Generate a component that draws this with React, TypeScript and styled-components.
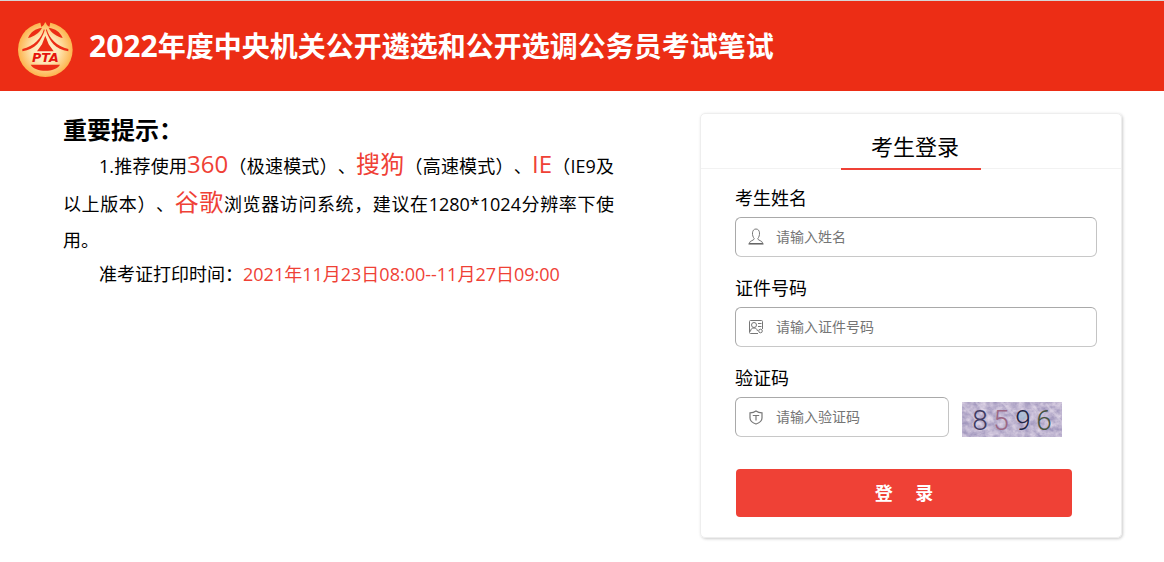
import React from "react";
import styled, { createGlobalStyle } from "styled-components";

const GlobalStyle = createGlobalStyle`
  *, *::before, *::after { box-sizing: border-box; }
  body {
    margin: 0;
    background: #fff;
    color: #000;
    font-family: "Open Sans", "Noto Sans CJK SC", sans-serif;
    font-size: 18px;
    font-weight: 370;
    text-spacing-trim: space-all;
  }
  h1, h2, p { margin: 0; }
`;

const Header = styled.header`
  display: flex;
  align-items: center;
  gap: 16px;
  height: 91px;
  padding: 6px 18px 0;
  border-top: 1px solid #d5d5d5;
  background: #ec2d15;
  color: #fff;
`;

const Title = styled.h1`
  padding-bottom: 6px;
  font-size: 28px;
  line-height: 40px;
  font-weight: 700;
`;

const Year = styled.span`
  font-size: 30px;
`;

const Main = styled.main`
  display: flex;
  align-items: flex-start;
  justify-content: space-between;
  gap: 48px;
  padding: 22px 42px 24px 63px;
`;

const Notice = styled.section`
  flex: 0 1 551px;
  padding-top: 1px;
`;

const NoticeTitle = styled.h2`
  font-size: 24px;
  line-height: 32px;
  font-weight: 700;
`;

const Paragraph = styled.p`
  line-height: 36px;
  text-indent: 36px;
  text-align: justify;
`;

const PrintTime = styled.p`
  line-height: 32px;
  text-indent: 36px;
`;

const Browser = styled.span`
  color: #ef4136;
  font-size: 24px;
`;

const Period = styled.span`
  color: #ef4136;
`;

const Panel = styled.section`
  flex: 0 0 422px;
  padding-bottom: 20px;
  border: 1px solid #eee;
  border-radius: 5px;
  box-shadow: 1px 1px 3px #ccc;
`;

const PanelHead = styled.div`
  display: flex;
  justify-content: center;
  height: 55px;
  border-bottom: 1px solid #f2f2f2;
`;

const PanelTitle = styled.h2`
  width: 140px;
  height: 56px;
  padding: 8px 0 0 8px;
  border-bottom: 2px solid #ef4136;
  font-size: 22px;
  line-height: 48px;
  font-weight: inherit;
  text-align: center;
`;

const Form = styled.form`
  display: flex;
  flex-direction: column;
  gap: 14px;
  padding: 12px 24px 0 34px;
`;

const Field = styled.div`
  display: flex;
  flex-direction: column;
`;

const Label = styled.label`
  height: 36px;
  line-height: 34px;
`;

const InputBox = styled.div<{ $width?: number }>`
  display: flex;
  align-items: center;
  gap: 12px;
  width: ${(p) => (p.$width ? `${p.$width}px` : "100%")};
  height: 40px;
  padding: 0 12px;
  border: 1px solid;
  border-color: #a9a9a9 #c4c4c4 #c8c8c8 #a9a9a9;
  border-radius: 6px;
`;

const Input = styled.input`
  flex: 1;
  min-width: 0;
  padding: 0 0 2px;
  border: 0;
  outline: 0;
  background: transparent;
  font: inherit;
  font-size: 14px;
  &::placeholder { color: #757575; opacity: 1; }
`;

const CodeRow = styled.div`
  display: flex;
  align-items: flex-end;
  gap: 13px;
`;

const Submit = styled.button`
  width: 336px;
  height: 48px;
  margin: 18px 0 0 1px;
  padding: 0 0 2px;
  border: 0;
  border-radius: 4px;
  background: #ef4136;
  color: #fff;
  font: inherit;
  font-weight: 700;
  cursor: pointer;
`;

const Logo = () => (
  <svg width="55" height="56" viewBox="0 0 165 168" aria-hidden="true">
    <defs>
      <radialGradient id="gold">
        <stop offset="0" stopColor="#fff3d0" />
        <stop offset="0.5" stopColor="#fee6b4" />
        <stop offset="1" stopColor="#fdb44e" />
      </radialGradient>
    </defs>
    <circle cx="82" cy="86" r="82" fill="url(#gold)" />
    <g fill="#ec2d15">
      <path d="M66 0H98L94 18Q86 14 82 2Q78 14 70 18z" />
      <path d="M72 20C52 23 38 32 30 51C48 46 64 36 72 20z" />
      <path d="M92 20C112 23 126 32 134 51C116 46 100 36 92 20z" />
      <path d="M78 24C70 52 48 76 13 84V91C52 86 70 60 80 28z" />
      <path d="M86 24C94 52 116 76 151 84V91C112 86 94 60 84 28z" />
      <path d="M82 44L92 70L107 91H57L72 70z" />
      <path d="M38 131H126C112 155 52 155 38 131z" />
    </g>
    <text x="82" y="124" textAnchor="middle" fontFamily="DejaVu Sans, sans-serif" fontSize="38" fontWeight="700" fontStyle="italic" fill="#e5130c">PTA</text>
  </svg>
);

const UserIcon = () => (
  <svg width="16" height="18" viewBox="0 0 16 18" fill="none" stroke="#777" strokeWidth="1" aria-hidden="true">
    <path d="M6.200 10.500C3.800 8 3.500 1 8 1S12.200 8 9.800 10.500c0 2.500 4.500 1.500 5 5H1.200c.5-3.500 5-2.500 5-5z" />
    <path d="M.5 16h15" stroke="#555" />
  </svg>
);

const CardIcon = () => (
  <svg width="16" height="16" viewBox="0 0 16 16" fill="none" stroke="#777" strokeWidth="1" aria-hidden="true">
    <path d="M10 14.500H2.500a1 1 0 0 1-1-1v-11a1 1 0 0 1 1-1h11a1 1 0 0 1 1 1V10M2.500 12.500c0-2.500 1.500-3.500 3.500-3.500s3 1 3.500 3M10 4.500h3.500M10 7.500h3.500" />
    <circle cx="6" cy="6" r="2.500" />
    <circle cx="12.500" cy="12" r="1.800" />
  </svg>
);

const ShieldIcon = () => (
  <svg width="16" height="18" viewBox="0 0 16 18" fill="none" stroke="#777" strokeWidth="1.200" aria-hidden="true">
    <path d="M8 3C6 4.500 4 4.800 2 4.800V10c0 3 3 5 6 6 3-1 6-3 6-6V4.800C12 4.800 10 4.500 8 3zM4.800 7.500h6.400M8 7.500V12.500" />
  </svg>
);

const digits = [
  { char: "8", x: 18, color: "#3f3b62" },
  { char: "5", x: 39, color: "#9c6784" },
  { char: "9", x: 61, color: "#1f2443" },
  { char: "6", x: 82, color: "#45543f" },
];

const Captcha = () => (
  <svg width="100" height="35" viewBox="0 0 100 35" role="img" aria-label="验证码 8596">
    <defs>
      <filter id="grain" x="0" y="0" width="1" height="1" colorInterpolationFilters="sRGB">
        <feTurbulence type="fractalNoise" baseFrequency="0.16 0.2" numOctaves="3" seed="4" />
        <feColorMatrix values="0.36 0 0 0 0.57  0.36 0 0 0 0.53  0.24 0 0 0 0.7  0 0 0 0 1" />
      </filter>
    </defs>
    <rect width="100" height="35" fill="#c3b8d5" filter="url(#grain)" />
    <path d="M2 4L20 24M14 0L32 20M40 0L58 20M68 0L90 26M84 2L100 20" stroke="#e2dae8" strokeOpacity="0.4" strokeWidth="2" />
    <circle cx="61" cy="13" r="5" fill="#9fc0d6" fillOpacity="0.6" />
    {digits.map((d) => (
      <text key={d.char} x={d.x} y="28" textAnchor="middle" fontFamily="Roboto, sans-serif" fontSize="28" fontWeight="300" fill={d.color}>
        {d.char}
      </text>
    ))}
  </svg>
);

export default function App() {
  return (
    <>
      <GlobalStyle />
      <Header>
        <Logo />
        <Title><Year>2022</Year>年度中央机关公开遴选和公开选调公务员考试笔试</Title>
      </Header>
      <Main>
        <Notice>
          <NoticeTitle>重要提示：</NoticeTitle>
          <Paragraph>
            1.推荐使用<Browser>360</Browser>（极速模式）、<Browser>搜狗</Browser>（高速模式）、<Browser>IE</Browser>（IE9及以上版本）、<Browser>谷歌</Browser>浏览器访问系统，建议在1280*1024分辨率下使用。
          </Paragraph>
          <PrintTime>
            准考证打印时间：<Period>2021年11月23日08:00--11月27日09:00</Period>
          </PrintTime>
        </Notice>
        <Panel>
          <PanelHead>
            <PanelTitle>考生登录</PanelTitle>
          </PanelHead>
          <Form onSubmit={(e) => e.preventDefault()}>
            <Field>
              <Label htmlFor="name">考生姓名</Label>
              <InputBox>
                <UserIcon />
                <Input id="name" type="text" placeholder="请输入姓名" />
              </InputBox>
            </Field>
            <Field>
              <Label htmlFor="card">证件号码</Label>
              <InputBox>
                <CardIcon />
                <Input id="card" type="text" placeholder="请输入证件号码" />
              </InputBox>
            </Field>
            <Field>
              <Label htmlFor="code">验证码</Label>
              <CodeRow>
                <InputBox $width={214}>
                  <ShieldIcon />
                  <Input id="code" type="text" placeholder="请输入验证码" />
                </InputBox>
                <Captcha />
              </CodeRow>
            </Field>
            <Submit type="submit">登{"\u3000\u00a0"}录</Submit>
          </Form>
        </Panel>
      </Main>
    </>
  );
}
